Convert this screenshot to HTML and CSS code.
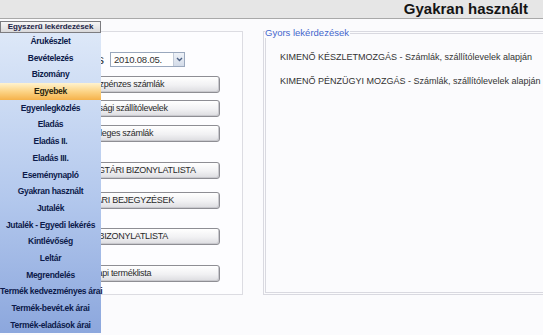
FILE: index.html
```html
<!DOCTYPE html>
<html lang="hu">
<head>
<meta charset="utf-8">
<title>Gyakran használt</title>
<link rel="stylesheet" href="styles.css">
</head>
<body>
<header class="topbar">
  <h1 class="title">Gyakran használt</h1>
</header>
<main class="content">
  <section class="panel">
    <div class="date-row">
      <div class="date-label"><span>Lekérdezés</span></div>
      <div class="select">
        <span class="select-value">2010.08.05.</span>
        <span class="select-arrow">
          <svg width="7" height="5" viewBox="0 0 7 5"><path d="M1 1 L3.5 3.5 L6 1" fill="none" stroke="#4d6185" stroke-width="1.4"/></svg>
        </span>
      </div>
    </div>
    <div class="buttons">
      <button class="btn b1">Készpénzes számlák</button>
      <button class="btn b2">Tagsági szállítólevelek</button>
      <button class="btn b3">Végleges számlák</button>
      <button class="btn b4">MAGTÁRI BIZONYLATLISTA</button>
      <button class="btn b5">PTÁRI BEJEGYZÉSEK</button>
      <button class="btn b6">KP BIZONYLATLISTA</button>
      <button class="btn b7">E napi terméklista</button>
    </div>
  </section>
  <fieldset class="quick">
    <legend class="quick-legend">Gyors lekérdezések</legend>
    <ul class="quick-list">
      <li>KIMENŐ KÉSZLETMOZGÁS - Számlák, szállítólevelek alapján</li>
      <li>KIMENŐ PÉNZÜGYI MOZGÁS - Számlák, szállítólevelek alapján</li>
    </ul>
  </fieldset>
</main>
<nav class="menu">
  <div class="menu-head">Egyszerű lekérdezések</div>
  <ul class="menu-list">
    <li>Árukészlet</li>
    <li>Bevételezés</li>
    <li>Bizomány</li>
    <li class="active">Egyebek</li>
    <li>Egyenlegközlés</li>
    <li>Eladás</li>
    <li>Eladás II.</li>
    <li>Eladás III.</li>
    <li>Eseménynapló</li>
    <li>Gyakran használt</li>
    <li>Jutalék</li>
    <li>Jutalék - Egyedi lekérés</li>
    <li>Kintlévőség</li>
    <li>Leltár</li>
    <li>Megrendelés</li>
    <li>Termék kedvezményes árai</li>
    <li>Termék-bevét.ek árai</li>
    <li>Termék-eladások árai</li>
  </ul>
</nav>
</body>
</html>
```
FILE: styles.css
```css
html, body {
  margin: 0;
  padding: 0;
}
body {
  width: 543px;
  height: 335px;
  overflow: hidden;
  background: #fbfbfd;
  font-family: "Liberation Sans", Arial, sans-serif;
  color: #333;
  position: relative;
}
.topbar {
  height: 18px;
  background: #e6e6e6;
  border-bottom: 1px solid #a9a9a9;
  display: flex;
  justify-content: flex-end;
  align-items: center;
  padding-right: 15px;
}
.title {
  margin: 0;
  font-size: 15px;
  font-weight: bold;
  color: #141414;
  line-height: 18px;
}
.content {
  display: flex;
  align-items: flex-start;
  gap: 20px;
  padding-top: 8px;
  overflow: hidden;
}
.panel {
  margin-top: 4px;
  margin-left: 40px;
  width: 203px;
  height: 264px;
  box-sizing: border-box;
  border: 1px solid #dcdce2;
  background: #fdfdff;
  padding: 20px 22px 0 19px;
  flex-shrink: 0;
}
.date-row {
  display: grid;
  grid-template-columns: 44px 75px;
  column-gap: 6px;
  height: 15px;
  align-items: center;
}
.date-label {
  display: flex;
  justify-content: flex-end;
  white-space: nowrap;
  font-size: 13px;
  color: #333;
  line-height: 15px;
}
.select {
  height: 15px;
  box-sizing: border-box;
  border: 1px solid #9aa8bd;
  background: #fff;
  display: flex;
  align-items: stretch;
}
.select-value {
  flex: 1;
  font-size: 9.5px;
  letter-spacing: -0.2px;
  line-height: 13px;
  padding-left: 3px;
  color: #333;
}
.select-arrow {
  width: 10px;
  background: linear-gradient(#eef2f8, #d3dbe8);
  border-left: 1px solid #c3cbd8;
  display: flex;
  align-items: center;
  justify-content: center;
}
.buttons {
  display: flex;
  flex-direction: column;
}
.btn {
  width: 160px;
  height: 17px;
  box-sizing: border-box;
  border: 1px solid #8e8e94;
  border-radius: 3px;
  background: linear-gradient(#ffffff, #f1f1f3 55%, #dcdce0);
  box-shadow: inset -1px -1px 0 #c9c9ce;
  font-family: "Liberation Sans", Arial, sans-serif;
  font-size: 9px;
  letter-spacing: -0.3px;
  color: #2a2a2a;
  text-align: left;
  padding: 0 0 0 24px;
  line-height: 15px;
  white-space: nowrap;
  overflow: hidden;
}
.b1 { margin-top: 9px; }
.b2 { margin-top: 7px; }
.b3 { margin-top: 8px; }
.b4 { margin-top: 20px; }
.b5 { margin-top: 13px; }
.b6 { margin-top: 19px; }
.b7 { margin-top: 20px; }

.quick {
  margin: 0;
  padding: 0;
  width: 300px;
  height: 268px;
  box-sizing: border-box;
  border: 3px double #d9d9e0;
  flex-shrink: 0;
  min-width: 0;
}
.quick-legend {
  padding: 0 1px 0 0;
  margin-left: -1px;
  font-size: 9.5px;
  line-height: 11px;
  color: #4466cc;
}
.quick-list {
  list-style: none;
  margin: 0;
  padding: 7px 0 0 14px;
}
.quick-list li {
  font-size: 9px;
  line-height: 24px;
  color: #333;
  white-space: nowrap;
}

.menu {
  position: absolute;
  left: 0;
  top: 21px;
  width: 101px;
}
.menu-head {
  height: 12px;
  box-sizing: border-box;
  border: 1px solid #7c7c80;
  background: linear-gradient(#f6f6f6, #d9d9db);
  font-size: 8px;
  font-weight: bold;
  letter-spacing: -0.1px;
  color: #1c2448;
  text-align: center;
  line-height: 10px;
  white-space: nowrap;
}
.menu-list {
  list-style: none;
  margin: 0;
  padding: 0;
  background: linear-gradient(#dde8f8, #b3c8ed 55%, #8ca7dd);
}
.menu-list li {
  height: 16.7px;
  line-height: 16.7px;
  font-size: 8.5px;
  font-weight: bold;
  letter-spacing: -0.3px;
  color: #0c1a4a;
  text-align: center;
  white-space: nowrap;
}
.menu-list li.active {
  background: linear-gradient(#fff3cf, #fcd486 50%, #f5b24a);
  color: #2b2610;
}
```
